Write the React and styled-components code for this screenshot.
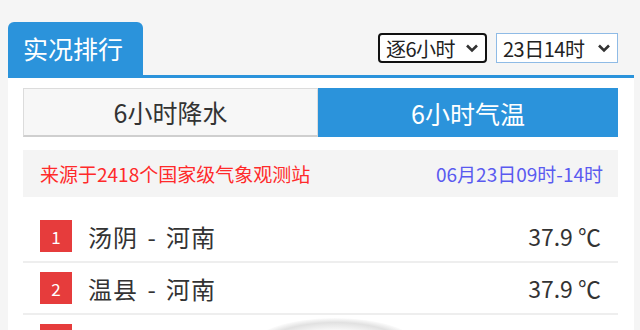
import React from "react";
import styled, { createGlobalStyle } from "styled-components";

const GlobalStyle = createGlobalStyle`
  html, body {
    margin: 0;
    background: #f5f5f5;
    font-family: "Microsoft YaHei", "Noto Sans CJK SC", "Noto Sans", sans-serif;
  }
`;

const BLUE = "#2b93db";

const Page = styled.div`
  position: relative;
  height: 330px;
  overflow: hidden;
  padding: 22px 6px 0 8px;
  box-sizing: border-box;
`;

const Header = styled.div`
  display: flex;
  justify-content: space-between;
  align-items: flex-start;
  border-bottom: 3px solid ${BLUE};
`;

const MainTab = styled.div`
  width: 135px;
  height: 53px;
  box-sizing: border-box;
  background: ${BLUE};
  color: #fff;
  font-size: 25px;
  line-height: 53px;
  padding-left: 15px;
  border-radius: 6px 6px 0 0;
`;

const Selects = styled.div`
  display: flex;
  gap: 9px;
  margin: 11px 16px 0 0;
`;

const Select = styled.div`
  height: 30px;
  box-sizing: border-box;
  display: flex;
  align-items: center;
  justify-content: space-between;
  padding: 0 6px 0 ${(p) => (p.$focused ? "6px" : "6px")};
  width: ${(p) => p.$width}px;
  background: #fff;
  color: #222;
  font-size: 20px;
  letter-spacing: -0.5px;
  border: ${(p) => (p.$focused ? "2px solid #111" : "1px solid #8fbbe6")};
  border-radius: ${(p) => (p.$focused ? "4px" : "0")};
`;

const Panel = styled.div`
  background: #fff;
  padding: 10px 16px 0 15px;
  height: 260px;
`;

const TabRow = styled.div`
  display: grid;
  grid-template-columns: 295px 1fr;
  height: 49px;
`;

const SubTab = styled.div`
  display: flex;
  align-items: center;
  justify-content: center;
  box-sizing: border-box;
  font-size: 25px;
  background: ${(p) => (p.$active ? BLUE : "#f7f7f7")};
  color: ${(p) => (p.$active ? "#fff" : "#333")};
  border: ${(p) => (p.$active ? "none" : "1px solid #dcdcdc")};
  border-bottom: ${(p) => (p.$active ? "none" : "2px solid #cfcfcf")};
`;

const InfoBar = styled.div`
  margin-top: 13px;
  height: 47px;
  background: #f4f4f4;
  display: flex;
  align-items: center;
  justify-content: space-between;
  padding: 0 15px 0 17px;
  font-size: 19px;
`;

const Source = styled.span`
  color: #ff2a2a;
`;

const Period = styled.span`
  color: #5a5af0;
`;

const List = styled.div`
  margin-top: 14px;
`;

const Row = styled.div`
  display: flex;
  align-items: center;
  height: 50px;
  padding: 0 17px;
  border-bottom: 2px solid #eeeeee;
`;

const Badge = styled.div`
  width: 32px;
  height: 32px;
  background: #e63c3c;
  color: #fff;
  font-size: 17px;
  display: flex;
  align-items: center;
  justify-content: center;
  margin-right: 16px;
`;

const Name = styled.div`
  flex: 1;
  font-size: 24px;
  letter-spacing: 1px;
  word-spacing: 3px;
  color: #333;
`;

const Value = styled.div`
  font-size: 23px;
  color: #333;
`;

const Watermark = styled.div`
  position: absolute;
  left: 250px;
  top: 318px;
  width: 170px;
  height: 60px;
  border-radius: 50%;
  background: radial-gradient(ellipse at center, rgba(210,210,210,0.1) 40%, rgba(200,200,200,0.55) 60%, rgba(255,255,255,0) 72%);
`;

const Chevron = () => (
  <svg width="14" height="10" viewBox="0 0 14 10">
    <path d="M2 2.5 L7 7.5 L12 2.5" fill="none" stroke="#333" strokeWidth="2.6" />
  </svg>
);

const rows = [
  { name: "汤阴 - 河南", value: "37.9 ℃" },
  { name: "温县 - 河南", value: "37.9 ℃" },
  { name: "修武 - 河南", value: "37.8 ℃" },
];

export default function App() {
  return (
    <Page>
      <GlobalStyle />
      <Header>
        <MainTab>实况排行</MainTab>
        <Selects>
          <Select $focused $width={109}>
            逐6小时
            <Chevron />
          </Select>
          <Select $width={122}>
            23日14时
            <Chevron />
          </Select>
        </Selects>
      </Header>
      <Panel>
        <TabRow>
          <SubTab>6小时降水</SubTab>
          <SubTab $active>6小时气温</SubTab>
        </TabRow>
        <InfoBar>
          <Source>来源于2418个国家级气象观测站</Source>
          <Period>06月23日09时-14时</Period>
        </InfoBar>
        <List>
          {rows.map((r, i) => (
            <Row key={i}>
              <Badge>{i + 1}</Badge>
              <Name>{r.name}</Name>
              <Value>{r.value}</Value>
            </Row>
          ))}
        </List>
      </Panel>
      <Watermark />
    </Page>
  );
}
